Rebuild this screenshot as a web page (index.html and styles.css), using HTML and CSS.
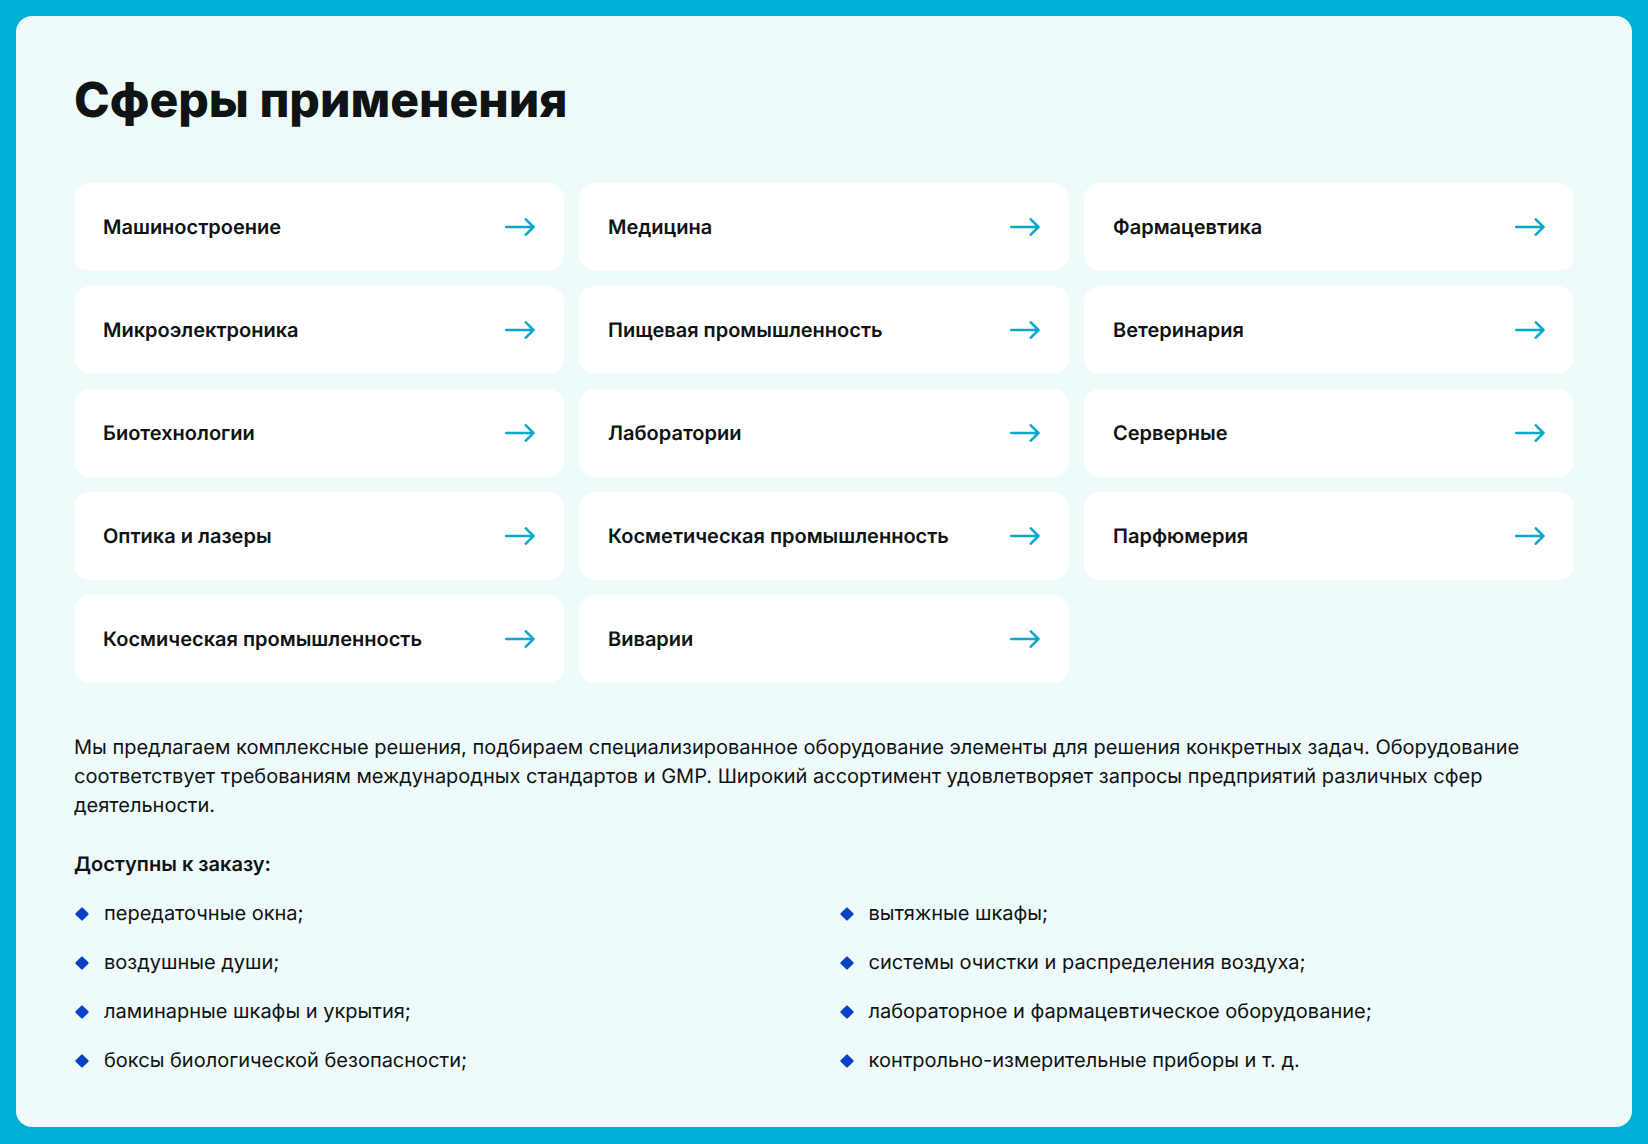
FILE: index.html
```html
<!DOCTYPE html>
<html lang="ru">
<head>
<meta charset="utf-8">
<meta name="viewport" content="width=device-width, initial-scale=1">
<title>Сферы применения</title>
<link rel="stylesheet" href="styles.css">
</head>
<body>
<svg class="sprite" aria-hidden="true"><symbol id="arrow" viewBox="0 0 30 18"><path d="M1.2 9H28.5M20.8 1.3L28.5 9L20.8 16.7" fill="none" stroke="currentColor" stroke-width="2.5" stroke-linecap="round" stroke-linejoin="round"/></symbol></svg>
<main class="panel">
<h1 class="title">Сферы применения</h1>
<nav class="cards" aria-label="Сферы применения">
<a class="card" href="#">Машиностроение<svg class="arrow"><use href="#arrow"/></svg></a>
<a class="card" href="#">Медицина<svg class="arrow"><use href="#arrow"/></svg></a>
<a class="card" href="#">Фармацевтика<svg class="arrow"><use href="#arrow"/></svg></a>
<a class="card" href="#">Микроэлектроника<svg class="arrow"><use href="#arrow"/></svg></a>
<a class="card" href="#">Пищевая промышленность<svg class="arrow"><use href="#arrow"/></svg></a>
<a class="card" href="#">Ветеринария<svg class="arrow"><use href="#arrow"/></svg></a>
<a class="card" href="#">Биотехнологии<svg class="arrow"><use href="#arrow"/></svg></a>
<a class="card" href="#">Лаборатории<svg class="arrow"><use href="#arrow"/></svg></a>
<a class="card" href="#">Серверные<svg class="arrow"><use href="#arrow"/></svg></a>
<a class="card" href="#">Оптика и лазеры<svg class="arrow"><use href="#arrow"/></svg></a>
<a class="card" href="#">Косметическая промышленность<svg class="arrow"><use href="#arrow"/></svg></a>
<a class="card" href="#">Парфюмерия<svg class="arrow"><use href="#arrow"/></svg></a>
<a class="card" href="#">Космическая промышленность<svg class="arrow"><use href="#arrow"/></svg></a>
<a class="card" href="#">Виварии<svg class="arrow"><use href="#arrow"/></svg></a>
</nav>
<p class="intro">Мы предлагаем комплексные решения, подбираем специализированное оборудование элементы для решения конкретных задач. Оборудование соответствует требованиям международных стандартов и GMP. Широкий ассортимент удовлетворяет запросы предприятий различных сфер деятельности.</p>
<h2 class="subtitle">Доступны к заказу:</h2>
<ul class="list">
<li class="item">передаточные окна;</li>
<li class="item">воздушные души;</li>
<li class="item">ламинарные шкафы и укрытия;</li>
<li class="item">боксы биологической безопасности;</li>
<li class="item">вытяжные шкафы;</li>
<li class="item">системы очистки и распределения воздуха;</li>
<li class="item">лабораторное и фармацевтическое оборудование;</li>
<li class="item">контрольно-измерительные приборы и т. д.</li>
</ul>
</main>
</body>
</html>
```

FILE: styles.css
```css
* {
  box-sizing: border-box;
}

body {
  margin: 0;
  padding: 16px;
  background: #00afd5;
  color: #101314;
  font: 400 20px/29px Inter, sans-serif;
  text-rendering: geometricPrecision;
}

.sprite {
  display: none;
}

.panel {
  padding: 58px 58px 52px;
  border-radius: 16px;
  background: #effafa;
}

.title {
  margin: 0 0 57px;
  font-size: 48px;
  font-weight: 800;
  line-height: 52px;
}

.cards {
  display: grid;
  grid-template-columns: repeat(3, 1fr);
  gap: 15px;
}

.card {
  display: flex;
  align-items: center;
  justify-content: space-between;
  height: 88px;
  padding: 0 29px;
  border-radius: 16px;
  background: #fff;
  color: inherit;
  font-weight: 600;
  text-decoration: none;
}

.arrow {
  flex: none;
  width: 30px;
  height: 18px;
  color: #08a8cc;
}

.intro {
  margin: 50px 0 30px;
}

.subtitle {
  margin: 0 0 20px;
  font-size: 20px;
  line-height: 29px;
  font-weight: 600;
}

.list {
  display: grid;
  grid-template-rows: repeat(4, auto);
  grid-template-columns: repeat(2, 1fr);
  grid-auto-flow: column;
  gap: 20px 29px;
  margin: 0;
  padding: 0;
  list-style: none;
}

.item {
  display: flex;
  align-items: center;
  gap: 17px;
  padding-left: 3px;
}

.item::before {
  content: "";
  flex: none;
  width: 10px;
  height: 10px;
  border-radius: 1px;
  background: #0841c6;
  transform: rotate(45deg);
}
```
